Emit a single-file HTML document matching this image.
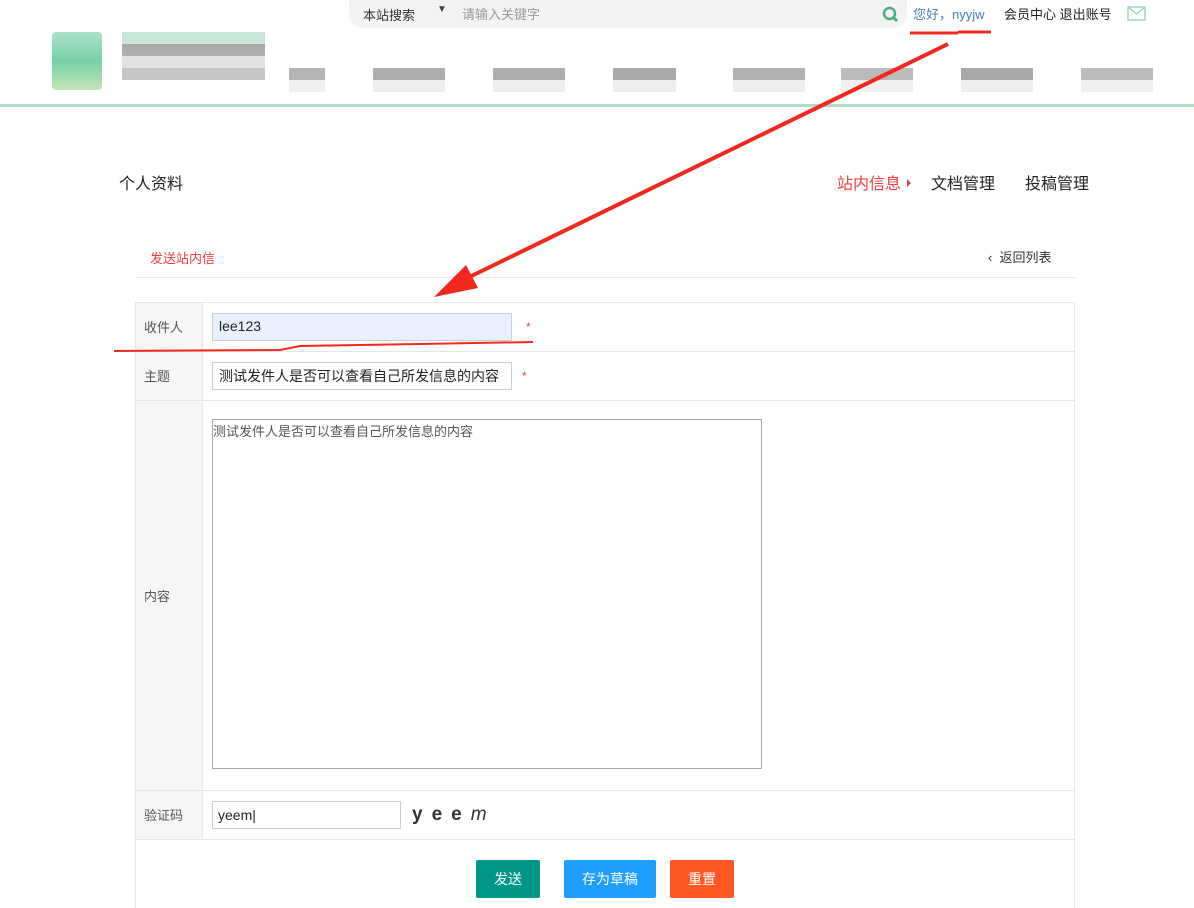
<!DOCTYPE html>
<html><head><meta charset="utf-8"><style>
*{margin:0;padding:0;box-sizing:border-box}
html,body{width:1194px;height:908px;overflow:hidden}
body{background:#fff;font-family:"Liberation Sans","Noto Sans CJK SC",sans-serif;position:relative;color:#333}
.abs{position:absolute}
</style></head><body>
<div class="abs" style="left:349px;top:0;width:558px;height:28px;background:#f3f3f3;border-radius:0 0 14px 14px"></div>
<div class="abs" style="left:363px;top:5px;font-size:13px;color:#333">本站搜索</div>
<div class="abs" style="left:437px;top:4px;font-size:10px;color:#444">▼</div>
<div class="abs" style="left:462px;top:4px;font-size:13px;color:#999">请输入关键字</div>
<svg class="abs" style="left:882px;top:6px" width="18" height="18"><circle cx="7.5" cy="7.5" r="5.5" stroke="#4caf7d" stroke-width="2.5" fill="none"/><line x1="11" y1="11" x2="15" y2="15" stroke="#4caf7d" stroke-width="3"/></svg>
<div class="abs" style="left:913px;top:4px;font-size:13px;color:#4a7fb8">您好，nyyjw</div>
<div class="abs" style="left:1004px;top:4px;font-size:13px;color:#222">会员中心 退出账号</div>
<svg class="abs" style="left:1127px;top:6px" width="19" height="16"><rect x="1" y="1" width="17" height="13" fill="none" stroke="#8fd3b0" stroke-width="1.3"/><path d="M1 1 L9.5 8 L18 1" fill="none" stroke="#8fd3b0" stroke-width="1.3"/></svg>
<div class="abs" style="left:52px;top:32px;width:50px;height:58px;background:linear-gradient(#9fdcc0,#5cc895 50%,#b7e0a8);opacity:.85;border-radius:4px"></div>
<div class="abs" style="left:122px;top:32px;width:143px;height:48px;background:linear-gradient(#c8e6d8 0,#c8e6d8 25%,#a8a8a8 25%,#b0b0b0 50%,#e2e2e2 50%,#e2e2e2 75%,#c6c6c6 75%)"></div>
<div class="abs" style="left:289px;top:68px;width:36px;height:24px;background:linear-gradient(#b4b4b4 50%,#f0f0f0 50%)"></div>
<div class="abs" style="left:373px;top:68px;width:72px;height:24px;background:linear-gradient(#aeaeae 50%,#eee 50%)"></div>
<div class="abs" style="left:493px;top:68px;width:72px;height:24px;background:linear-gradient(#aeaeae 50%,#eee 50%)"></div>
<div class="abs" style="left:613px;top:68px;width:63px;height:24px;background:linear-gradient(#aaa 50%,#eee 50%)"></div>
<div class="abs" style="left:733px;top:68px;width:72px;height:24px;background:linear-gradient(#b2b2b2 50%,#eee 50%)"></div>
<div class="abs" style="left:841px;top:68px;width:72px;height:24px;background:linear-gradient(#bbb 50%,#f0f0f0 50%)"></div>
<div class="abs" style="left:961px;top:68px;width:72px;height:24px;background:linear-gradient(#a8a8a8 50%,#eee 50%)"></div>
<div class="abs" style="left:1081px;top:68px;width:72px;height:24px;background:linear-gradient(#bbb 50%,#f0f0f0 50%)"></div>
<div class="abs" style="left:0;top:104px;width:1194px;height:3px;background:#b2dcc8"></div>
<div class="abs" style="left:119px;top:170px;font-size:16px;color:#222">个人资料</div>
<div class="abs" style="left:837px;top:170px;font-size:16px;color:#f03c3c">站内信息</div>
<div class="abs" style="left:907px;top:179px;width:0;height:0;border-left:4px solid #f03c3c;border-top:4px solid transparent;border-bottom:4px solid transparent"></div>
<div class="abs" style="left:931px;top:170px;font-size:16px;color:#222">文档管理</div>
<div class="abs" style="left:1025px;top:170px;font-size:16px;color:#222">投稿管理</div>
<div class="abs" style="left:150px;top:248px;font-size:13px;color:#f03c3c">发送站内信</div>
<div class="abs" style="left:988px;top:247px;font-size:13px;color:#333">‹ &nbsp;返回列表</div>
<div class="abs" style="left:135px;top:277px;width:940px;height:1px;background:#e6e6e6"></div>
<div class="abs" style="left:135px;top:302px;width:940px;height:620px;border:1px solid #e6e6e6"></div>
<div class="abs" style="left:136px;top:303px;width:67px;height:536px;background:#f6f6f6;border-right:1px solid #e6e6e6"></div>
<div class="abs" style="left:135px;top:351px;width:940px;height:1px;background:#e6e6e6"></div>
<div class="abs" style="left:135px;top:400px;width:940px;height:1px;background:#e6e6e6"></div>
<div class="abs" style="left:135px;top:790px;width:940px;height:1px;background:#e6e6e6"></div>
<div class="abs" style="left:135px;top:839px;width:940px;height:1px;background:#e6e6e6"></div>
<div class="abs" style="left:144px;top:317px;font-size:13px;color:#555">收件人</div>
<div class="abs" style="left:144px;top:366px;font-size:13px;color:#555">主题</div>
<div class="abs" style="left:144px;top:586px;font-size:13px;color:#555">内容</div>
<div class="abs" style="left:144px;top:805px;font-size:13px;color:#555">验证码</div>
<div class="abs" style="left:212px;top:313px;width:300px;height:28px;border:1px solid #ccc;background:#e8f0fe;font-size:14px;padding:4px 6px;color:#222">lee123</div>
<div class="abs" style="left:526px;top:320px;font-size:12px;color:#f03c3c">*</div>
<div class="abs" style="left:212px;top:362px;width:300px;height:28px;border:1px solid #ccc;font-size:14px;padding:3px 6px;color:#222;white-space:nowrap;overflow:hidden">测试发件人是否可以查看自己所发信息的内容</div>
<div class="abs" style="left:522px;top:369px;font-size:12px;color:#f03c3c">*</div>
<div class="abs" style="left:212px;top:419px;width:550px;height:350px;border:1px solid #aaa;font-size:13px;padding:1px 0;color:#555">测试发件人是否可以查看自己所发信息的内容</div>
<div class="abs" style="left:212px;top:801px;width:189px;height:28px;border:1px solid #ccc;font-size:14px;padding:5px 5px;color:#222">yeem|</div>
<div class="abs" style="left:412px;top:804px;font-size:19px;font-weight:bold;color:#333;letter-spacing:9px">yee<span style="font-weight:normal;font-style:italic">m</span></div>
<div class="abs" style="left:476px;top:860px;width:64px;height:38px;background:#009688;color:#fff;font-size:14px;text-align:center;line-height:38px;border-radius:2px">发送</div>
<div class="abs" style="left:564px;top:860px;width:92px;height:38px;background:#1e9fff;color:#fff;font-size:14px;text-align:center;line-height:38px;border-radius:2px">存为草稿</div>
<div class="abs" style="left:670px;top:860px;width:64px;height:38px;background:#ff5722;color:#fff;font-size:14px;text-align:center;line-height:38px;border-radius:2px">重置</div>
<svg class="abs" style="left:0;top:0" width="1194" height="908">
<path d="M910 33 L958 33 M958 32 L991 32" stroke="#f0281e" stroke-width="3" fill="none"/>
<line x1="948" y1="44" x2="455" y2="284" stroke="#f0281e" stroke-width="4"/>
<polygon points="434,297 466,265 478,288" fill="#f0281e"/>
<path d="M114 351 L280 350 L300 346 L420 344 L533 342" stroke="#f0281e" stroke-width="2" fill="none"/>
</svg>
</body></html>
